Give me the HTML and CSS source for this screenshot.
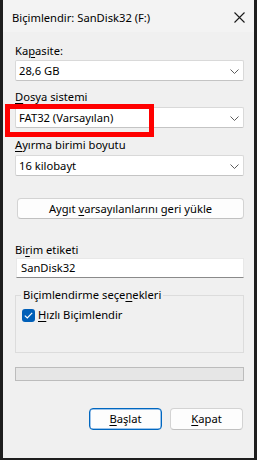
FILE: index.html
```html
<!DOCTYPE html>
<html lang="tr">
<head>
<meta charset="utf-8">
<link rel="stylesheet" href="styles.css">
</head>
<body>
<div class="window">
  <div class="titlebar">
    <span class="title">Biçimlendir: SanDisk32 (F:)</span>
    <svg class="close" width="11" height="11" viewBox="0 0 11 11"><path d="M0.5 0.5 L10.5 10.5 M10.5 0.5 L0.5 10.5" stroke="#1a1a1a" stroke-width="1.1" fill="none"/></svg>
  </div>
  <div class="content">
    <div class="label l1">Ka<u>p</u>asite:</div>
    <div class="combo"><span>28,6 GB</span><svg class="chev" width="9" height="5" viewBox="0 0 9 5"><path d="M0.5 0.5 L4.5 4.5 L8.5 0.5" stroke="#5c5c5c" stroke-width="1" fill="none"/></svg></div>
    <div class="label l2"><u>D</u>osya sistemi</div>
    <div class="combo"><span>FAT32 (Varsayılan)</span><svg class="chev" width="9" height="5" viewBox="0 0 9 5"><path d="M0.5 0.5 L4.5 4.5 L8.5 0.5" stroke="#5c5c5c" stroke-width="1" fill="none"/></svg></div>
    <div class="label l3"><u>A</u>yırma birimi boyutu</div>
    <div class="combo"><span>16 kilobayt</span><svg class="chev" width="9" height="5" viewBox="0 0 9 5"><path d="M0.5 0.5 L4.5 4.5 L8.5 0.5" stroke="#5c5c5c" stroke-width="1" fill="none"/></svg></div>
    <div class="btn wide"><span>Aygıt <u>v</u>arsayılanlarını geri yükle</span></div>
    <div class="label l4">Bi<u>r</u>im etiketi</div>
    <div class="input">SanDisk32</div>
    <div class="group">
      <span class="legend">Biçimlendirme seçe<u>n</u>ekleri</span>
      <div class="check-row">
        <span class="checkbox"><svg width="9" height="7" viewBox="0 0 9 7"><path d="M0.8 3.6 L3.3 6 L8.2 0.9" stroke="#fff" stroke-width="1.2" fill="none"/></svg></span>
        <span><u>H</u>ızlı Biçimlendir</span>
      </div>
    </div>
    <div class="progress"></div>
    <div class="actions">
      <div class="btn primary"><span><u>B</u>aşlat</span></div>
      <div class="btn"><span><u>K</u>apat</span></div>
    </div>
  </div>
  <div class="highlight"></div>
</div>
</body>
</html>
```
FILE: styles.css
```css
html, body {
  margin: 0;
  padding: 0;
}
body {
  background: #1e1e1e;
  width: 257px;
  height: 460px;
  overflow: hidden;
  font-family: "Noto Sans", "Open Sans", sans-serif;
  font-size: 11.2px;
  color: #000;
}
u {
  text-decoration: underline;
  text-underline-offset: 2px;
  text-decoration-thickness: 1px;
}
.window {
  position: relative;
  margin-left: 3px;
  width: 251px;
  height: 458px;
  background: #f0f0f0;
  display: flex;
  flex-direction: column;
}
.titlebar {
  height: 32px;
  background: #f3f3f3;
  display: flex;
  align-items: center;
  padding-left: 9px;
  padding-right: 9px;
  justify-content: space-between;
  box-sizing: border-box;
}
.title {
  line-height: 16px;
  padding-top: 4px;
}
.close {
  margin-top: 3px;
}
.content {
  padding: 0 10px 0 12px;
  display: flex;
  flex-direction: column;
}
.label {
  line-height: 16px;
  height: 16px;
}
.l1 { margin-top: 11px; margin-bottom: 1px; }
.l2 { margin-top: 8px; margin-bottom: 2px; }
.l3 { margin-top: 9px; margin-bottom: 2px; }
.l4 { margin-top: 23px; margin-bottom: 0; }
.combo {
  height: 21px;
  box-sizing: border-box;
  background: #fff;
  border: 1px solid #d9d9d9;
  border-bottom-color: #c4c4c4;
  border-radius: 2px;
  display: flex;
  align-items: center;
  justify-content: space-between;
  padding: 0 4px 0 3px;
  line-height: 16px;
}
.chev { margin-top: 1px; }
.btn {
  height: 21px;
  box-sizing: border-box;
  background: #fdfdfd;
  border: 1px solid #d3d3d3;
  border-bottom-color: #c0c0c0;
  border-radius: 4px;
  display: flex;
  align-items: center;
  justify-content: center;
  line-height: 16px;
}
.wide {
  margin-top: 22px;
  margin-left: 2px;
}
.input {
  height: 20px;
  box-sizing: border-box;
  background: #fff;
  border: 1px solid #e8e8e8;
  border-bottom: 1px solid #8a8a8a;
  padding-left: 4px;
  line-height: 17px;
  margin-left: 1px;
}
.group {
  margin-top: 17px;
  border: 1px solid #dcdcdc;
  height: 58px;
  box-sizing: border-box;
  position: relative;
  padding: 11px 0 0 6px;
}
.legend {
  position: absolute;
  top: -9px;
  left: 5px;
  background: #f0f0f0;
  padding: 0 2px;
  line-height: 16px;
}
.check-row {
  display: flex;
  align-items: center;
  gap: 3px;
  line-height: 16px;
}
.checkbox {
  width: 13px;
  height: 13px;
  background: #005fb8;
  border-radius: 3px;
  display: flex;
  align-items: center;
  justify-content: center;
}
.progress {
  margin-top: 14px;
  height: 14px;
  box-sizing: border-box;
  border: 1px solid #bcbcbc;
  background: #e6e6e6;
}
.actions {
  margin-top: 27px;
  display: flex;
  justify-content: flex-end;
  gap: 8px;
  padding-right: 1px;
}
.actions .btn {
  width: 73px;
  height: 22px;
}
.actions .primary {
  border: 1px solid #0067c0;
  box-shadow: inset 0 0 0 0.5px #3d8ad6;
}
.highlight {
  position: absolute;
  left: 2px;
  top: 104px;
  width: 149px;
  height: 33px;
  box-sizing: border-box;
  border: 5px solid #ff0000;
}
```
